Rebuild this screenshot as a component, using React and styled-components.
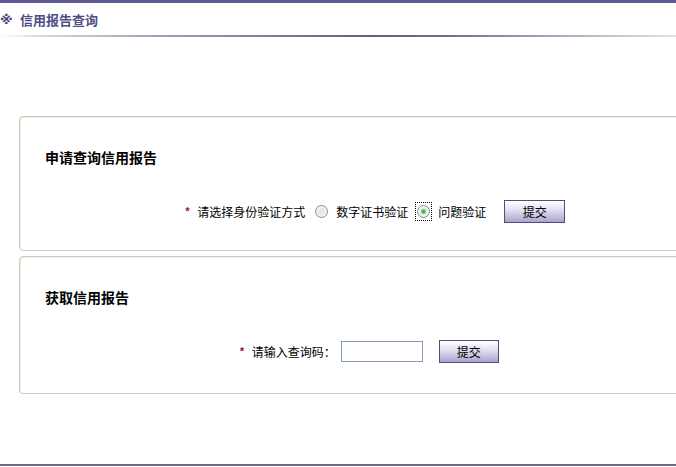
import styled, { createGlobalStyle } from "styled-components";

const GlobalStyle = createGlobalStyle`
  html, body {
    margin: 0;
    padding: 0;
    background: #fff;
    overflow: hidden;
  }
  body {
    font-family: "Noto Sans CJK SC", "Liberation Sans", sans-serif;
    font-size: 12px;
    color: #000;
  }
`;

export default function App() {
  return (
    <>
      <GlobalStyle />
      <Page>
        <TopBar />
        <Header>
          <Mark>※</Mark>
          信用报告查询
        </Header>
        <Rule />

        <Content>
          <Panel>
            <Title>申请查询信用报告</Title>
            <Row>
              <Required>*</Required>
              <Label>请选择身份验证方式</Label>
              <Option>
                <RadioBox>
                  <Radio />
                </RadioBox>
                数字证书验证
              </Option>
              <Option>
                <RadioBox $focused>
                  <Radio $checked />
                </RadioBox>
                问题验证
              </Option>
              <Button $wide>提交</Button>
            </Row>
          </Panel>

          <Panel $tall>
            <Title>获取信用报告</Title>
            <Row $offset={12}>
              <Required>*</Required>
              <Label $gap={5}>请输入查询码：</Label>
              <Input type="text" />
              <Button>提交</Button>
            </Row>
          </Panel>
        </Content>

        <Footer />
      </Page>
    </>
  );
}

const Page = styled.div`
  height: 100vh;
  display: flex;
  flex-direction: column;
`;

const TopBar = styled.div`
  height: 3px;
  background: #5b5b93;
`;

const Header = styled.div`
  height: 32px;
  display: flex;
  align-items: center;
  font-size: 13px;
  font-weight: bold;
  color: #4e4e84;
`;

const Mark = styled.span`
  width: 20px;
  font-family: "DejaVu Sans", sans-serif;
  font-size: 13px;
  font-weight: bold;
  color: #3f3f70;
`;

const Rule = styled.div`
  height: 2px;
  background: linear-gradient(
    to right,
    #ffffff 0%,
    #d8d8e0 6%,
    #9c9cb2 25%,
    #5f5f80 55%,
    #6e6e8c 66%,
    #a8a8bc 82%,
    #e2e2ea 100%
  );
`;

const Content = styled.div`
  padding: 79px 0 0 19px;
  display: flex;
  flex-direction: column;
  gap: 5px;
`;

const Panel = styled.div`
  width: 712px;
  height: ${(p) => (p.$tall ? "138px" : "135px")};
  box-sizing: border-box;
  border: 1px solid #cdcdbd;
  border-radius: 4px;
  box-shadow: inset 1px 1px 0 #ecece2;
  padding: 32px 25px 0;
`;

const Title = styled.div`
  font-size: 14px;
  font-weight: bold;
  line-height: 16px;
  margin-bottom: 35px;
`;

const Row = styled.div`
  display: flex;
  align-items: center;
  justify-content: center;
  height: 22px;
  margin-left: -25px;
  margin-right: -25px;
  padding-right: ${(p) => p.$offset || 0}px;
`;

const Required = styled.span`
  color: #a3122c;
  font-size: 11px;
  font-weight: bold;
  margin-right: 7px;
`;

const Label = styled.span`
  margin-right: ${(p) => p.$gap ?? 8}px;
`;

const Option = styled.label`
  display: flex;
  align-items: center;
  margin-right: 7px;
`;

const RadioBox = styled.span`
  width: 17px;
  height: 19px;
  box-sizing: border-box;
  display: flex;
  align-items: center;
  justify-content: center;
  margin-right: 6px;
  border: 1px dotted ${(p) => (p.$focused ? "#000" : "transparent")};
`;

const Radio = styled.span`
  width: 13px;
  height: 13px;
  box-sizing: border-box;
  border-radius: 50%;
  border: 1px solid #7b8ea6;
  background: radial-gradient(
    circle at 50% 50%,
    ${(p) => (p.$checked ? "#34a534 0, #6fcf5a 2px, #e9ede6 3px," : "")} #e8e8e4 30%,
    #ffffff 100%
  );
`;

const Button = styled.button`
  width: ${(p) => (p.$wide ? "61px" : "60px")};
  height: 23px;
  margin-left: ${(p) => (p.$wide ? "11px" : "16px")};
  padding: 0;
  font-family: inherit;
  font-size: 12px;
  color: #000;
  border: 1px solid #4e4e78;
  background: linear-gradient(to bottom, #ffffff 0%, #e4e2f0 40%, #a9a4cc 100%);
  cursor: pointer;
`;

const Input = styled.input`
  width: 82px;
  height: 21px;
  box-sizing: border-box;
  border: 1px solid #7f9db9;
  padding: 0 3px;
  font-family: inherit;
  font-size: 12px;
  outline: none;
`;

const Footer = styled.div`
  margin-top: auto;
  margin-bottom: 1px;
  height: 2px;
  background: #6a6a8c;
`;
